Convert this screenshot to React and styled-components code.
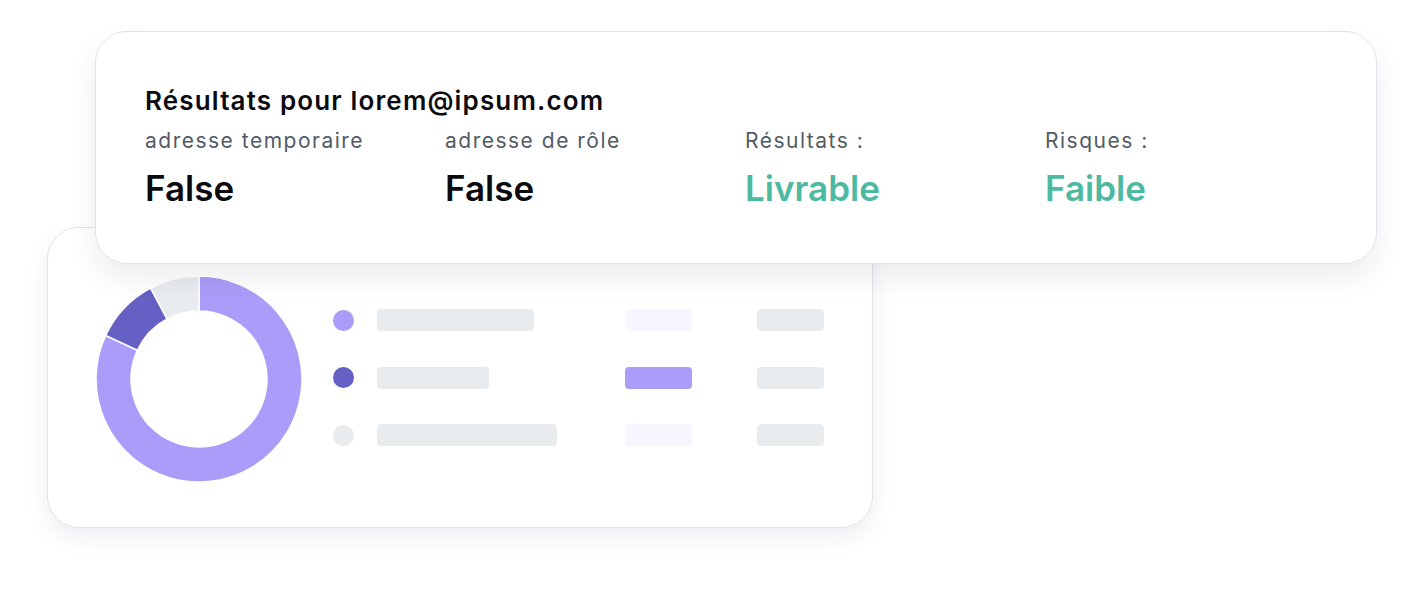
import React from 'react';
import styled, { createGlobalStyle } from 'styled-components';

const GlobalStyle = createGlobalStyle`
  html, body {
    margin: 0;
    padding: 0;
    background: #ffffff;
    font-family: Inter, "Noto Sans", sans-serif;
  }
`;

const Stage = styled.div`
  width: 1424px;
  height: 592px;
  padding-top: 31px;
  box-sizing: border-box;
  overflow: hidden;
  background: #fff;
`;

const ResultCard = styled.section`
  position: relative;
  z-index: 2;
  margin-left: 95px;
  width: 1282px;
  height: 233px;
  box-sizing: border-box;
  background: #fff;
  border: 1.5px solid #dfe3e8;
  border-radius: 32px;
  box-shadow: 0 14px 28px rgba(20, 30, 50, 0.08);
  padding: 53px 0 0 49px;
`;

const Title = styled.h2`
  margin: 0;
  font-size: 26px;
  line-height: 32px;
  font-weight: 600;
  color: #0b0b0f;
  letter-spacing: 1.15px;
`;

const Columns = styled.div`
  display: grid;
  grid-template-columns: repeat(4, 300px);
  margin-top: 11px;
`;

const Stat = styled.div`
  display: flex;
  flex-direction: column;
`;

const Label = styled.span`
  font-size: 21px;
  line-height: 26px;
  color: #525b66;
  font-weight: 400;
  letter-spacing: 1.5px;
`;

const Value = styled.span`
  margin-top: 13px;
  font-size: 35px;
  line-height: 42px;
  font-weight: 600;
  color: ${p => (p.$good ? '#4eb9a1' : '#0b0b0f')};
`;

const ChartCard = styled.section`
  position: relative;
  z-index: 1;
  margin-left: 47px;
  margin-top: -37px;
  width: 826px;
  height: 301px;
  box-sizing: border-box;
  background: #fff;
  border: 1.5px solid #dfe3e8;
  border-radius: 32px;
  box-shadow: 0 10px 22px rgba(20, 30, 50, 0.07);
  display: flex;
  align-items: flex-start;
  padding: 47px 0 0 47px;
`;

const Legend = styled.div`
  display: flex;
  flex-direction: column;
  gap: 35.5px;
  margin-left: 30px;
  margin-top: 34px;
`;

const LegendRow = styled.div`
  display: grid;
  grid-template-columns: 44px 248px 132px 67px;
  align-items: center;
  height: 22px;
`;

const Dot = styled.span`
  width: 21px;
  height: 21px;
  border-radius: 50%;
  background: ${p => p.$color};
`;

const Bar = styled.span`
  display: block;
  height: 22px;
  width: ${p => p.$w}px;
  border-radius: 4px;
  background: ${p => p.$color || '#e9ecef'};
`;

const rows = [
  { dot: '#aa9cf8', w: 157, pill: '#f7f5fe' },
  { dot: '#665fc4', w: 112, pill: '#aa9cf8' },
  { dot: '#e9ecef', w: 180, pill: '#f7f5fe' },
];

const polar = (cx, cy, r, deg) => {
  const a = ((deg - 90) * Math.PI) / 180;
  return [cx + r * Math.cos(a), cy + r * Math.sin(a)];
};

const arc = (cx, cy, ro, ri, a0, a1) => {
  const [x0, y0] = polar(cx, cy, ro, a0);
  const [x1, y1] = polar(cx, cy, ro, a1);
  const [x2, y2] = polar(cx, cy, ri, a1);
  const [x3, y3] = polar(cx, cy, ri, a0);
  const large = a1 - a0 > 180 ? 1 : 0;
  return `M${x0} ${y0} A${ro} ${ro} 0 ${large} 1 ${x1} ${y1} L${x2} ${y2} A${ri} ${ri} 0 ${large} 0 ${x3} ${y3} Z`;
};

const Donut = () => (
  <svg width="208" height="208" viewBox="0 0 208 208">
    <g stroke="#fff" strokeWidth="1.5">
      <path d={arc(104, 104, 103, 68, 0, 295)} fill="#aa9cf8" />
      <path d={arc(104, 104, 103, 68, 295, 332)} fill="#665fc4" />
      <path d={arc(104, 104, 103, 68, 332, 360)} fill="#e8ebef" />
    </g>
  </svg>
);

export default function App() {
  return (
    <Stage>
      <GlobalStyle />
      <ResultCard>
        <Title>Résultats pour lorem@ipsum.com</Title>
        <Columns>
          <Stat>
            <Label>adresse temporaire</Label>
            <Value>False</Value>
          </Stat>
          <Stat>
            <Label>adresse de rôle</Label>
            <Value>False</Value>
          </Stat>
          <Stat>
            <Label>Résultats :</Label>
            <Value $good>Livrable</Value>
          </Stat>
          <Stat>
            <Label>Risques :</Label>
            <Value $good>Faible</Value>
          </Stat>
        </Columns>
      </ResultCard>
      <ChartCard>
        <Donut />
        <Legend>
          {rows.map((r, i) => (
            <LegendRow key={i}>
              <Dot $color={r.dot} />
              <Bar $w={r.w} />
              <Bar $w={67} $color={r.pill} />
              <Bar $w={67} />
            </LegendRow>
          ))}
        </Legend>
      </ChartCard>
    </Stage>
  );
}
